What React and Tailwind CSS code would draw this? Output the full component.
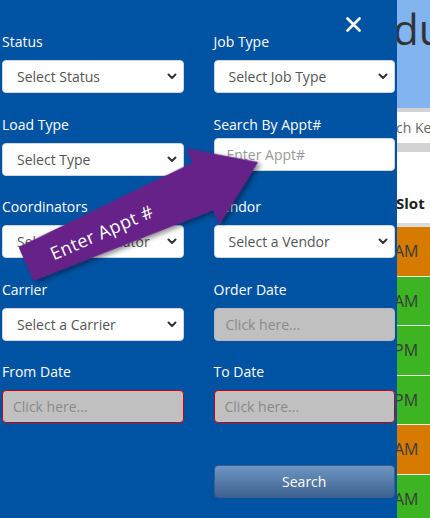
import React from 'react';

const font = { fontFamily: '"Open Sans", "Liberation Sans", sans-serif' };

const Chevron = () => (
    <svg width="10" height="7" viewBox="0 0 10 7" className="shrink-0">
        <path d="M1.5 1.5 L5 5 L8.5 1.5" fill="none" stroke="#333" strokeWidth="2" strokeLinecap="round" strokeLinejoin="round" />
    </svg>
);

const SelectBox = ({ text }) => (
    <div className="h-[33px] bg-white rounded-[4px] border border-[#cfd6de] flex items-center justify-between pl-[14px] pr-[6px] text-[14px] text-[#555]">
        <span className="truncate">{text}</span>
        <Chevron />
    </div>
);

const DateBox = ({ invalid }) => (
    <div className={`h-[33px] rounded-[4px] bg-[#c0c0c0] flex items-center text-[14px] text-[#8a8a8a] ${invalid ? 'border-[1.5px] border-[#cc0000] pl-[10px]' : 'border border-[#b8b8b8] pl-[11px]'}`}>
        Click here...
    </div>
);

const Field = ({ label, children, tight }) => (
    <div>
        <div className={`h-5 leading-5 text-[14px] text-white ${tight ? 'mb-[3px]' : 'mb-2'}`}>{label}</div>
        {children}
    </div>
);

const rows = [
    { color: 'bg-[#d77a00]', t: 'AM' },
    { color: 'bg-[#3db422]', t: 'AM' },
    { color: 'bg-[#3db422]', t: 'PM' },
    { color: 'bg-[#3db422]', t: 'PM' },
    { color: 'bg-[#d77a00]', t: 'AM' },
    { color: 'bg-[#3db422]', t: 'AM' },
];

const App = () => {
    return (
        <div className="relative w-[430px] h-[518px] overflow-hidden flex" style={font}>
            {/* filter drawer */}
            <div className="w-[397px] h-full bg-[#0053a3] px-[2px] shrink-0">
                <div className="h-8 flex justify-end items-start pt-[17px] pr-[34px]">
                    <svg width="15" height="15" viewBox="0 0 15 15">
                        <path d="M1.5 1.5 L13.5 13.5 M13.5 1.5 L1.5 13.5" stroke="white" strokeWidth="2.6" strokeLinecap="round" />
                    </svg>
                </div>
                <div className="grid grid-cols-2 gap-x-[30px] gap-y-[21.5px]">
                    <Field label="Status"><SelectBox text="Select Status" /></Field>
                    <Field label="Job Type"><SelectBox text="Select Job Type" /></Field>
                    <Field label="Load Type"><SelectBox text="Select Type" /></Field>
                    <Field label="Search By Appt#" tight>
                        <div className="h-[33px] bg-white rounded-[4px] border border-[#cfd6de] flex items-center pl-[12px] text-[14px] text-[#999]">
                            Enter Appt#
                        </div>
                    </Field>
                    <Field label="Coordinators"><SelectBox text="Select a Coordinator" /></Field>
                    <Field label="Vendor"><SelectBox text="Select a Vendor" /></Field>
                    <Field label="Carrier"><SelectBox text="Select a Carrier" /></Field>
                    <Field label="Order Date"><DateBox /></Field>
                    <Field label="From Date"><DateBox invalid /></Field>
                    <Field label="To Date"><DateBox invalid /></Field>
                </div>
                <div className="grid grid-cols-2 gap-x-[30px] mt-[42px]">
                    <div />
                    <button className="h-[33px] rounded-[4px] border border-[#3b5c88] bg-gradient-to-b from-[#6e96c2] to-[#3f6290] text-white text-[14px]">
                        Search
                    </button>
                </div>
            </div>

            {/* page behind the drawer */}
            <div className="flex-1 h-full overflow-hidden bg-white">
                <div className="h-[108px] bg-[#82b4ef] pt-[8px]">
                    <div className="text-[42px] leading-[42px] text-[#333] -ml-[4px] whitespace-nowrap">du</div>
                </div>
                <div className="h-[44px] bg-[#d3d3d3] pt-[4px] pb-[9px]">
                    <div className="h-[31px] bg-white flex items-center text-[14px] text-[#666] whitespace-nowrap -ml-[1px]">ch Ke</div>
                </div>
                <div className="h-[71px] flex items-end pb-[10px]">
                    <div className="text-[15px] font-bold text-[#222] -ml-[1px] leading-5">Slot</div>
                </div>
                <div className="h-[4px] bg-[#dcdcdc]" />
                {rows.map((r, i) => (
                    <div key={i} className={`h-[49.5px] ${r.color} border-b border-[#e8e8e8] flex items-center text-[16px] text-[#3a3a3a] whitespace-nowrap`}>
                        <span className="-ml-[3px]">{r.t}</span>
                    </div>
                ))}
            </div>

            {/* callout arrow */}
            <svg className="absolute left-0 top-0 pointer-events-none" width="430" height="518" viewBox="0 0 430 518">
                <defs>
                    <filter id="sh" x="-20%" y="-20%" width="140%" height="160%">
                        <feDropShadow dx="2" dy="3" stdDeviation="2.5" floodColor="#000" floodOpacity="0.45" />
                    </filter>
                </defs>
                <g transform="translate(26 264) rotate(-23.7)">
                    <polygon
                        points="1,-17.4 194,-25 194,-39.6 252,0 194,39.6 194,25 1,17.4"
                        fill="#662288"
                        stroke="#662288"
                        strokeWidth="2"
                        strokeLinejoin="round"
                        filter="url(#sh)"
                    />
                    <text x="82" y="8" textAnchor="middle" fill="white" fontSize="18" letterSpacing="0.4" style={font}>Enter Appt #</text>
                </g>
            </svg>
        </div>
    );
};

export default App;
